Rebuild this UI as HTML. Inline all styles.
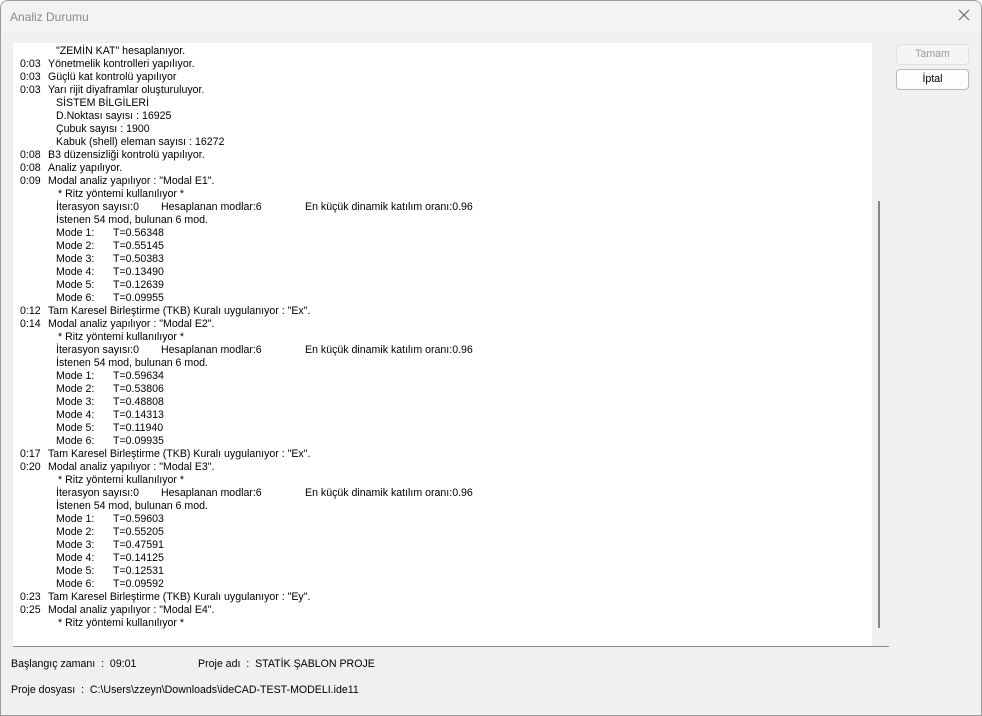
<!DOCTYPE html>
<html><head><meta charset="utf-8"><style>
*{margin:0;padding:0;box-sizing:border-box}
body{width:982px;height:716px;background:#fff;font-family:"Liberation Sans",sans-serif;font-size:10.6px;color:#000;overflow:hidden;position:relative}
.win{position:absolute;left:0;top:0;width:982px;height:716px;background:#f0f0f0;border:1px solid #9a9a9a;border-radius:8px 8px 0 0;overflow:hidden}
.title{position:absolute;left:0;top:0;width:100%;height:32px;background:#f3f3f3;color:#8a8a8a;font-size:12px;padding:9px 0 0 9px}
.x{position:absolute;right:10px;top:7px;width:14px;height:14px}
.box{position:absolute;left:12px;top:42px;width:876px;height:604px;background:#fff;border-bottom:1px solid #8a8a8a}
.sb{position:absolute;left:859px;top:0;width:17px;height:603px;background:#f0f0f0}
.thumb{position:absolute;left:6px;top:158px;width:2px;height:427px;background:#858585}
.l{position:absolute;white-space:pre;line-height:13px}
.btn{position:absolute;left:895px;width:73px;height:21px;border:1px solid #c8c8c8;border-radius:4px;text-align:center;line-height:19px;background:#fdfdfd}
.ft{position:absolute;white-space:pre}
</style></head><body><div class="win">
<div class="title">Analiz Durumu</div>
<svg class="x" viewBox="0 0 14 14"><path d="M2 2L12 12M12 2L2 12" stroke="#666" stroke-width="1.1"/></svg>
<div class="box" id="b"><div class="sb"><div class="thumb"></div></div></div>
<div class="btn" style="top:43px;color:#999;background:#f5f5f5;border-color:#e0e0e0">Tamam</div>
<div class="btn" style="top:68px;border-color:#b8b8b8">İptal</div>
<div class="ft" style="left:10px;top:657px">Başlangıç zamanı  :  09:01</div>
<div class="ft" style="left:197px;top:657px">Proje adı  :  STATİK ŞABLON PROJE</div>
<div class="ft" style="left:10px;top:683px">Proje dosyası  :  C:\Users\zzeyn\Downloads\ideCAD-TEST-MODELI.ide11</div>
</div>
<script>
var L=[
["","","\"ZEMİN KAT\" hesaplanıyor."],
["0:03","Yönetmelik kontrolleri yapılıyor."],
["0:03","Güçlü kat kontrolü yapılıyor"],
["0:03","Yarı rijit diyaframlar oluşturuluyor."],
["","","SİSTEM BİLGİLERİ"],
["","","D.Noktası sayısı : 16925"],
["","","Çubuk sayısı : 1900"],
["","","Kabuk (shell) eleman sayısı : 16272"],
["0:08","B3 düzensizliği kontrolü yapılıyor."],
["0:08","Analiz yapılıyor."]];
function modal(t,e,T,r){
L.push([t,"Modal analiz yapılıyor : \"Modal "+e+"\"."]);
L.push(["","","* Ritz yöntemi kullanılıyor *"]);
if(!T)return;
L.push(["","","IT"]);
L.push(["","","İstenen 54 mod, bulunan 6 mod."]);
for(var i=0;i<6;i++)L.push(["","","M","Mode "+(i+1)+":","T="+T[i]]);
L.push([r[0],"Tam Karesel Birleştirme (TKB) Kuralı uygulanıyor : \""+r[1]+"\"."]);
}
modal("0:09","E1",["0.56348","0.55145","0.50383","0.13490","0.12639","0.09955"],["0:12","Ex"]);
modal("0:14","E2",["0.59634","0.53806","0.48808","0.14313","0.11940","0.09935"],["0:17","Ex"]);
modal("0:20","E3",["0.59603","0.55205","0.47591","0.14125","0.12531","0.09592"],["0:23","Ey"]);
modal("0:25","E4");
var b=document.getElementById('b'),h='';
L.forEach(function(a,i){var y=2+i*13;
if(a.length==2){h+='<div class="l" style="left:7px;top:'+y+'px">'+a[0]+'</div><div class="l" style="left:35px;top:'+y+'px">'+a[1]+'</div>';}
else if(a[2]=="IT"){h+='<div class="l" style="left:43px;top:'+y+'px">İterasyon sayısı:0</div><div class="l" style="left:148px;top:'+y+'px">Hesaplanan modlar:6</div><div class="l" style="left:292px;top:'+y+'px">En küçük dinamik katılım oranı:0.96</div>';}
else if(a[2]=="M"){h+='<div class="l" style="left:43px;top:'+y+'px">'+a[3]+'</div><div class="l" style="left:100px;top:'+y+'px">'+a[4]+'</div>';}
else h+='<div class="l" style="left:'+(a[2].charAt(0)=='*'?45:43)+'px;top:'+y+'px">'+a[2]+'</div>';
});
b.insertAdjacentHTML('beforeend',h);
</script>
</body></html>
